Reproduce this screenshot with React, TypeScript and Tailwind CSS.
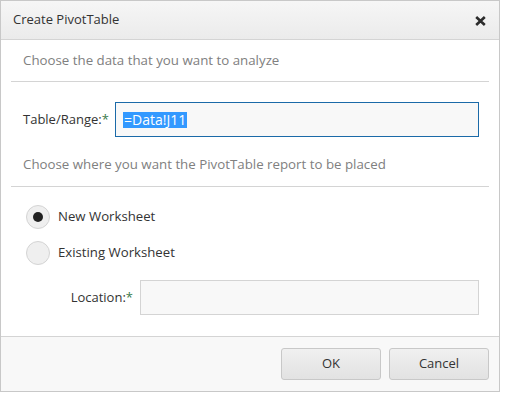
import React from "react";

export default function App() {
  const font = { fontFamily: '"Open Sans", "Noto Sans", sans-serif' };
  return (
    <div className="w-[510px] h-[400px] bg-white" style={font}>
      <div className="w-[500px] h-[392px] border border-[#c8c8c8] bg-white flex flex-col">
        {/* Header */}
        <div className="h-[39px] shrink-0 border-b border-[#d4d4d4] bg-gradient-to-b from-[#f6f6f6] to-[#ebebeb] flex items-center justify-between pl-[12px] pr-[13px]">
          <span className="text-[13px] text-[#333]">Create PivotTable</span>
          <svg width="11" height="10" viewBox="0 0 11 10" className="mt-[2px]">
            <path d="M1.2 1 L9.8 9 M9.8 1 L1.2 9" stroke="#2b2b2b" strokeWidth="2.6" strokeLinecap="butt" />
          </svg>
        </div>

        {/* Body */}
        <div className="flex-1 px-[10px] flex flex-col">
          <div className="h-[42px] shrink-0 flex items-center pl-[12px] border-b border-[#d4d4d4] text-[13.3px] text-[#808080]">
            Choose the data that you want to analyze
          </div>

          <div className="mt-[20px] flex items-center pl-[12px] pr-[10px]">
            <span className="w-[92px] text-[13px] text-[#333] shrink-0">
              Table/Range:<span className="text-[#3a7a4a]">*</span>
            </span>
            <div className="flex-1 h-[35px] border border-[#1b6aa8] bg-[#f8f8f8] flex items-center pl-[7px]">
              <span className="bg-[#3399ff] text-white text-[14px] leading-[16px] px-[1px]">=Data!J11</span>
            </div>
          </div>

          <div className="pt-[17px] pb-[12px] pl-[12px] border-b border-[#d4d4d4] text-[13.3px] leading-[20px] text-[#808080]">
            Choose where you want the PivotTable report to be placed
          </div>

          <div className="mt-[18px] flex items-center pl-[15px]">
            <div className="w-[24px] h-[24px] rounded-full border border-[#d4d4d4] bg-[#efefef] flex items-center justify-center">
              <div className="w-[10px] h-[10px] rounded-full bg-[#222]" />
            </div>
            <span className="ml-[8px] text-[13.2px] text-[#333]">New Worksheet</span>
          </div>

          <div className="mt-[12px] flex items-center pl-[15px]">
            <div className="w-[24px] h-[24px] rounded-full border border-[#d4d4d4] bg-[#efefef]" />
            <span className="ml-[8px] text-[13.2px] text-[#333]">Existing Worksheet</span>
          </div>

          <div className="mt-[15px] flex items-center pr-[10px]">
            <span className="w-[122px] shrink-0 text-right text-[13px] text-[#333]">
              Location:<span className="text-[#3a7a4a]">*</span>
            </span>
            <div className="ml-[7px] flex-1 h-[35px] border border-[#d4d4d4] bg-[#f8f8f8]" />
          </div>
        </div>

        {/* Footer */}
        <div className="h-[55px] shrink-0 border-t border-[#d4d4d4] bg-[#f8f8f8] flex justify-end items-start pt-[11px] pr-[10px] gap-[8px]">
          <button className="w-[100px] h-[32px] rounded-[3px] border border-[#c8c8c8] bg-gradient-to-b from-[#f0f0f0] to-[#e2e2e2] text-[13px] text-[#333]">
            OK
          </button>
          <button className="w-[100px] h-[32px] rounded-[3px] border border-[#c8c8c8] bg-gradient-to-b from-[#f0f0f0] to-[#e2e2e2] text-[13px] text-[#333]">
            Cancel
          </button>
        </div>
      </div>
    </div>
  );
}
